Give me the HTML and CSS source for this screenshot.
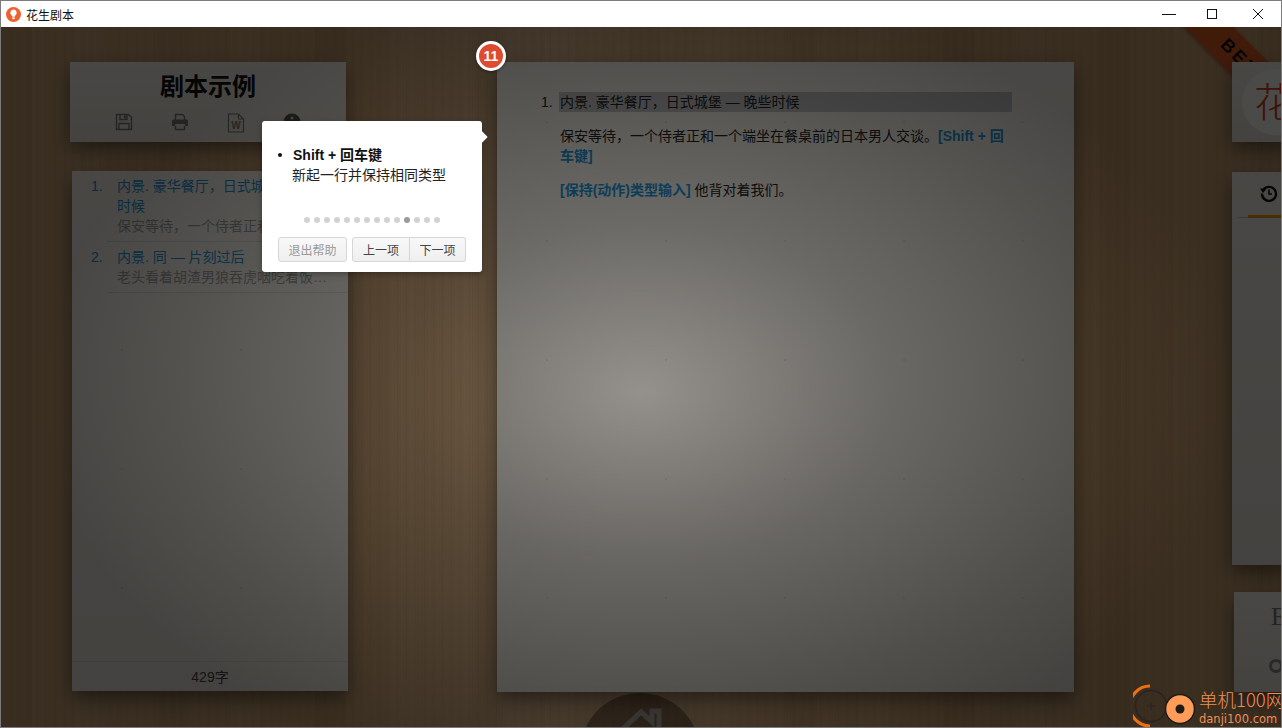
FILE: index.html
```html
<!DOCTYPE html>
<html lang="zh">
<head>
<meta charset="utf-8">
<title>花生剧本</title>
<link rel="stylesheet" href="styles.css">
</head>
<body>
<div class="window">
  <header class="titlebar">
    <svg class="app-icon" width="15" height="15" viewBox="0 0 15 15"><circle cx="7.5" cy="7.5" r="7.5" fill="#f1602c"/><path d="M7.5 2.6a3.2 3.2 0 0 1 2 5.7c-.5.4-.7.8-.8 1.4H6.3c-.1-.6-.3-1-.8-1.4a3.2 3.2 0 0 1 2-5.7z" fill="#fff"/><rect x="6.3" y="10.3" width="2.4" height="1.8" fill="#fff"/></svg>
    <span class="app-title">花生剧本</span>
    <div class="win-controls">
      <svg class="win-min" width="16" height="16" viewBox="0 0 16 16"><path d="M1 8.5h14" stroke="#111" fill="none"/></svg>
      <svg width="16" height="16" viewBox="0 0 16 16"><rect x="3.5" y="3.5" width="9" height="9" stroke="#111" fill="none"/></svg>
      <svg width="16" height="16" viewBox="0 0 16 16"><path d="M3 3l10 10M13 3L3 13" stroke="#111" fill="none"/></svg>
    </div>
  </header>
  <main class="stage">
    <div class="ribbon"><span>BETA</span></div>
    <div class="home-button">
      <svg width="70" height="40" viewBox="0 0 70 40"><path d="M9 31L36 6l11 10V5h7v17l10 9" fill="none" stroke="#a49e93" stroke-width="5"/></svg>
    </div>

    <section class="col col-left">
      <div class="paper doc-head">
        <h1>剧本示例</h1>
        <div class="tools">
          <svg width="18" height="18" viewBox="0 0 18 18"><path d="M1.5 1.5h12l3 3v12h-15z M5 1.5v5h7v-5 M4 16.5v-6h10v6" fill="none" stroke="#777" stroke-width="1.4"/><rect x="9" y="2.5" width="2" height="3" fill="#777"/></svg>
          <svg width="18" height="18" viewBox="0 0 18 18"><path d="M4.5 7V1.5h7l2 2V7M4.5 13v3.5h9V13" fill="none" stroke="#777" stroke-width="1.4"/><path d="M1 8a1.5 1.5 0 0 1 1.500-1.500h13A1.500 1.500 0 0 1 17 8v5h-3v-2H4v2H1z" fill="#777"/></svg>
          <svg class="word" width="18" height="20" viewBox="0 0 18 20"><path d="M1.500 1h10l5 5v13h-15z M11.500 1v5h5" fill="none" stroke="#777" stroke-width="1.200"/><text x="9" y="16" text-anchor="middle" class="word-w">W</text></svg>
          <svg width="18" height="18" viewBox="0 0 18 18"><circle cx="9" cy="9" r="8.500" fill="#555"/><circle cx="9" cy="5" r="1.500" fill="#ccc"/></svg>
        </div>
      </div>
      <div class="paper outline">
        <div class="scene">
          <div class="scene-num">1.</div>
          <div class="scene-body">
            <div class="scene-title">内景. 豪华餐厅，日式城堡 — 晚些时候</div>
            <div class="scene-preview">保安等待，一个侍者正和一个端坐在餐桌前的日本男人交谈。</div>
          </div>
        </div>
        <div class="scene">
          <div class="scene-num">2.</div>
          <div class="scene-body">
            <div class="scene-title">内景. 同 — 片刻过后</div>
            <div class="scene-preview">老头看着胡渣男狼吞虎咽吃着饭，一言不发地坐着。</div>
          </div>
        </div>
        <div class="word-count">429字</div>
      </div>
    </section>

    <section class="paper script">
      <div class="script-line">
        <span class="script-num">1.</span>
        <div class="script-heading">内景. 豪华餐厅，日式城堡 — 晚些时候</div>
      </div>
      <p class="script-para">保安等待，一个侍者正和一个端坐在餐桌前的日本男人交谈。<b class="hint">[Shift + 回车键]</b></p>
      <p class="script-para"><b class="hint">[保持(动作)类型输入]</b> 他背对着我们。</p>
    </section>

    <section class="col col-right">
      <div class="paper logo-card"><div class="logo-circle">花</div></div>
      <div class="paper side-panel">
        <div class="side-tabs">
          <svg width="20" height="20" viewBox="0 0 20 20"><path d="M4.500 6.500A7 7 0 1 1 3 10.500" fill="none" stroke="#111" stroke-width="2.400"/><path d="M1 5.500l6.500.2-3.500 4.300z" fill="#111"/><path d="M10 6.500V11h3" fill="none" stroke="#111" stroke-width="1.600"/></svg>
        </div>
        <div class="tab-rule"><i></i></div>
      </div>
      <div class="paper side-bottom">
        <div class="side-letter">E</div>
        <div class="side-ring"></div>
      </div>
    </section>

    <div class="dim"></div>

    <div class="badge">11</div>

    <aside class="popover">
      <ul class="pop-list">
        <li><b>Shift + 回车键</b><br><span class="pop-desc">新起一行并保持相同类型</span></li>
      </ul>
      <div class="dots">
        <i></i><i></i><i></i><i></i><i></i><i></i><i></i><i></i><i></i><i></i><i class="on"></i><i></i><i></i><i></i>
      </div>
      <div class="pop-buttons">
        <button class="btn btn-exit">退出帮助</button>
        <div class="btn-group">
          <button class="btn">上一项</button>
          <button class="btn">下一项</button>
        </div>
      </div>
    </aside>

    <div class="watermark">
      <svg width="66" height="46" viewBox="0 0 66 46">
        <path d="M17 3A20 20 0 0 0 17 43" fill="none" stroke="#f07010" stroke-width="3"/>
        <circle cx="18" cy="23" r="15.500" fill="none" stroke="#2a2420" stroke-width="1.500"/>
        <path d="M18 19v8M14 23h8" stroke="#2a2420" stroke-width="1.200"/>
        <circle cx="47" cy="26" r="14.500" fill="#ff9c58" stroke="#1d1a18" stroke-width="1.500"/>
        <circle cx="47" cy="26" r="4.500" fill="#1d1a18"/>
      </svg>
      <div class="wm-text">
        <div class="wm-cn">单机100网</div>
        <div class="wm-en">danji100.com</div>
      </div>
    </div>
  </main>
</div>
</body>
</html>
```
FILE: styles.css
```css
* { box-sizing: border-box; }
html, body { margin: 0; padding: 0; }
body {
  width: 1282px;
  height: 728px;
  overflow: hidden;
  font-family: "Liberation Sans", "Noto Sans CJK SC", sans-serif;
  font-size: 14px;
  color: #222;
}
.window {
  width: 1282px;
  height: 728px;
  border: 1px solid #7c7c7c;
  display: flex;
  flex-direction: column;
  background: #fff;
}
.titlebar {
  height: 26px;
  flex: none;
  display: flex;
  align-items: center;
  padding-left: 5px;
  background: #fff;
}
.app-icon { margin-right: 5px; }
.app-title { font-size: 12px; color: #111; }
.win-controls {
  margin-left: auto;
  display: flex;
  gap: 30px;
  padding-right: 15px;
}
.win-min { margin-right: -3px; }
.stage {
  position: relative;
  flex: 1;
  min-height: 0;
  overflow: hidden;
  display: flex;
  align-items: flex-start;
  padding: 35px 0 0 69px;
  background-color: #c9a477;
  background-image:
    repeating-linear-gradient(90deg, rgba(70,40,10,.05) 0 1px, transparent 1px 4px, rgba(255,235,200,.03) 4px 6px, transparent 6px 9px),
    repeating-linear-gradient(90deg, rgba(80,45,10,.05) 0 31px, transparent 31px 73px, rgba(255,230,190,.05) 73px 102px, transparent 102px 157px),
    linear-gradient(90deg, #c39c70 0, #bd9668 25%, #c9a67e 40%, #bb9467 75%, #c29a6c 100%);
}
.paper {
  position: relative;
  z-index: 1;
  flex: none;
  background-color: #efeae1;
  background-image:
    radial-gradient(circle at 50px 60px, rgba(60,60,60,.1) 0 1px, transparent 1.200px),
    linear-gradient(180deg, #f2eee6, #e4dfd6);
  background-size: 119px 119px, 100% 100%;
  box-shadow: 0 8px 18px rgba(0,0,0,.45);
}
.col { flex: none; display: flex; flex-direction: column; }

/* left column */
.col-left { width: 278px; }
.doc-head {
  width: 276px;
  height: 80px;
  text-align: center;
}
.doc-head h1 {
  margin: 0;
  padding-top: 8px;
  font-size: 24px;
  line-height: 34px;
  font-weight: 700;
  color: #111;
}
.tools {
  display: flex;
  justify-content: flex-start;
  gap: 38px;
  padding: 9px 0 0 45px;
}
.word-w { font-size: 10px; font-weight: 700; fill: #777; }
.outline {
  width: 276px;
  height: 520px;
  margin: 29px 0 0 2px;
  padding-top: 5px;
  display: flex;
  flex-direction: column;
}
.scene {
  display: flex;
  line-height: 20px;
  padding-left: 19px;
}
.scene + .scene { margin-top: 5px; }
.scene-num { width: 26px; flex: none; color: #1a8fd0; }
.scene-body {
  flex: 1;
  min-width: 0;
  margin-left: -10px;
  padding: 0 13px 5px 10px;
  border-bottom: 1px solid #d0d4d6;
}
.scene-title { color: #1a8fd0; }
.scene-preview {
  color: #999;
  white-space: nowrap;
  overflow: hidden;
  text-overflow: ellipsis;
}
.word-count {
  margin-top: auto;
  height: 30px;
  line-height: 30px;
  text-align: center;
  color: #444;
  border-top: 1px solid #cdd1d3;
}

/* script page */
.script {
  width: 577px;
  height: 630px;
  margin-left: 149px;
  padding: 30px 62px 0 62px;
  line-height: 20px;
}
.script-line { position: relative; }
.script-num { position: absolute; left: -18px; top: 0; color: #222; }
.script-heading { background: #bcbcbc; padding-left: 1px; color: #222; }
.script-para { margin: 14px 0 0; padding-left: 1px; color: #222; }
.hint { color: #1a8fd0; font-weight: 700; }

/* right column */
.col-right { width: 60px; margin-left: 158px; }
.logo-card {
  height: 80px;
  padding: 7px 0 0 10px;
  overflow: hidden;
}
.logo-circle {
  width: 66px;
  height: 66px;
  border-radius: 50%;
  background: #f9f8f6;
  color: #d23b22;
  font-size: 40px;
  line-height: 62px;
  padding-left: 12px;
  font-weight: 300;
  font-family: "Noto Sans CJK SC", sans-serif;
}
.side-panel { height: 393px; margin-top: 30px; }
.side-tabs { padding: 11px 0 0 27px; height: 43px; }
.tab-rule {
  height: 3px;
  margin-left: 6px;
  border-bottom: 1px solid #bbb;
  position: relative;
}
.tab-rule i {
  display: block;
  height: 3px;
  margin-left: 10px;
  background: #f39a12;
}
.side-bottom { height: 100px; margin: 27px 0 0 2px; overflow: hidden; }
.side-letter {
  padding: 10px 0 0 37px;
  font-family: "Liberation Serif", serif;
  font-size: 25px;
  line-height: 30px;
  color: #777;
}
.side-ring {
  width: 14px;
  height: 14px;
  border: 3px solid #888;
  border-radius: 50%;
  margin: 27px 0 0 35px;
}

/* decorations behind the pages */
.ribbon {
  position: absolute;
  left: 1175px;
  top: 10px;
  width: 120px;
  height: 35px;
  padding-left: 24px;
  background: #d95a22;
  transform: rotate(45deg);
  text-align: center;
  font-weight: 700;
  font-size: 18px;
  line-height: 35px;
  letter-spacing: 3px;
  color: #111;
  box-shadow: 0 1px 4px rgba(0,0,0,.3);
}
.home-button {
  position: absolute;
  left: 579px;
  top: 666px;
  width: 120px;
  height: 120px;
  border-radius: 50%;
  background: rgba(40,25,10,.45);
  padding: 13px 0 0 25px;
}

/* help mode */
.dim {
  position: absolute;
  z-index: 2;
  inset: 0;
  background: radial-gradient(ellipse 600px 400px at 640px 365px, rgba(0,0,0,.37) 0, rgba(0,0,0,.55) 42%, rgba(0,0,0,.65) 78%, rgba(0,0,0,.7) 100%);
}
.badge {
  position: absolute;
  z-index: 3;
  left: 475px;
  top: 14px;
  width: 30px;
  height: 30px;
  border: 3px solid #fff;
  border-radius: 50%;
  background: #dd4b30;
  color: #fff;
  font-weight: 700;
  font-size: 14px;
  line-height: 24px;
  text-align: center;
  box-shadow: 0 1px 3px rgba(0,0,0,.4);
}
.popover {
  position: absolute;
  z-index: 3;
  left: 261px;
  top: 94px;
  width: 220px;
  height: 151px;
  background: #fff;
  border-radius: 3px;
  padding: 24px 16px 0;
  box-shadow: 0 2px 6px rgba(0,0,0,.3);
}
.popover::after {
  content: "";
  position: absolute;
  right: -4px;
  top: 12px;
  width: 8px;
  height: 8px;
  background: #fff;
  transform: rotate(45deg);
}
.pop-list {
  margin: 0;
  padding: 0 0 0 15px;
  line-height: 20px;
  color: #222;
  height: 64px;
  list-style: none;
}
.pop-list li { position: relative; }
.pop-list li::before {
  content: "";
  position: absolute;
  left: -15px;
  top: 8px;
  width: 4px;
  height: 4px;
  border-radius: 50%;
  background: #111;
}
.pop-list b { color: #111; }
.pop-desc { margin-left: -1px; }
.dots {
  display: flex;
  gap: 4px;
  padding-left: 26px;
  margin-top: 8px;
}
.dots i {
  width: 6px;
  height: 6px;
  border-radius: 50%;
  background: #d2d2d2;
}
.dots i.on { background: #9a9a9a; }
.pop-buttons {
  display: flex;
  gap: 5px;
  margin-top: 14px;
}
.btn {
  font: inherit;
  font-size: 12px;
  height: 25px;
  width: 57px;
  padding: 0;
  color: #444;
  background: linear-gradient(180deg, #f8f8f8, #efefef);
  border: 1px solid #d6d6d6;
  border-radius: 3px;
}
.btn-exit { width: 69px; color: #999; }
.btn-group { display: flex; }
.btn-group .btn:first-child { border-radius: 3px 0 0 3px; width: 58px; }
.btn-group .btn:last-child { border-radius: 0 3px 3px 0; border-left: 0; width: 56px; }

.watermark {
  position: absolute;
  z-index: 3;
  left: 1132px;
  top: 656px;
  display: flex;
  align-items: flex-start;
}
.wm-cn {
  margin-top: 3px;
  font-size: 18.500px;
  line-height: 26px;
  color: #ee8f55;
  font-weight: 300;
  font-family: "Noto Sans CJK SC", sans-serif;
  white-space: nowrap;
}
.wm-en {
  font-family: "DejaVu Sans", sans-serif;
  font-size: 11.500px;
  line-height: 15px;
  color: #ee8f55;
  white-space: nowrap;
}
```
